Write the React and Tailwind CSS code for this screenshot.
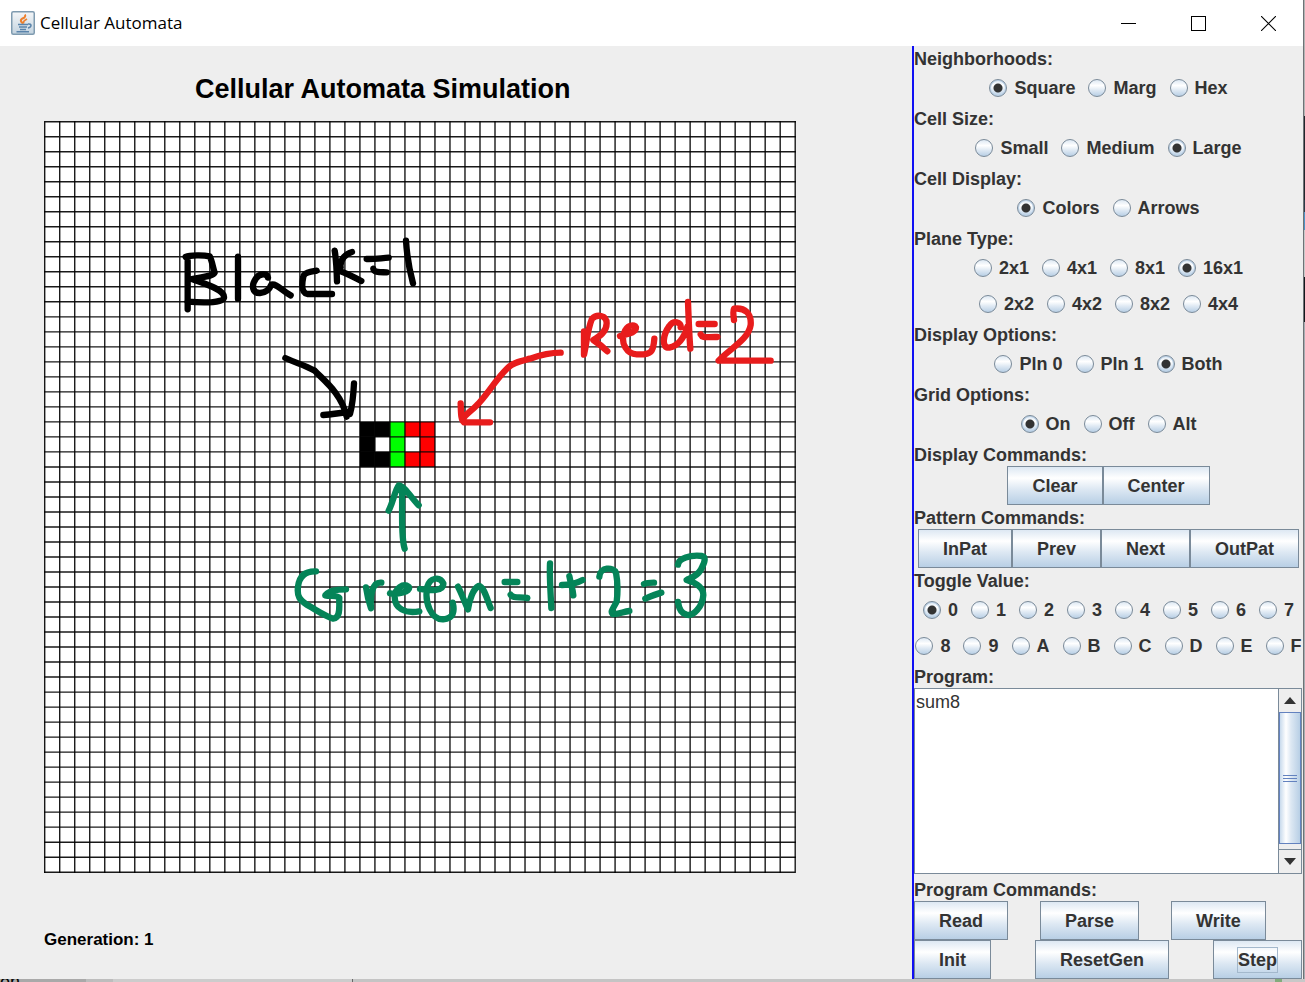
import { useState } from "react";

const CELLS = 50;
const PITCH = 15.01;
const LINES = Array.from({ length: CELLS + 1 }, (_, i) => i * PITCH + 0.7);

const PATTERN = [
  [21, 20, "#000"], [22, 20, "#000"], [23, 20, "#0f0"], [24, 20, "#f00"], [25, 20, "#f00"],
  [21, 21, "#000"], [23, 21, "#0f0"], [25, 21, "#f00"],
  [21, 22, "#000"], [22, 22, "#000"], [23, 22, "#0f0"], [24, 22, "#f00"], [25, 22, "#f00"],
];

const BLACK_INK =
  "M53 92V238M47 81C60 75 100 75 119 79C126 92 128 110 134 128C128 140 95 140 66 147C100 160 165 178 162 203C158 220 100 219 52 215" +
  "M204 80V206M294 143C292 130 270 128 258 145C242 168 248 190 270 189C288 188 298 180 304 164C320 160 335 182 362 196" +
  "M440 122C425 125 402 128 400 140C396 160 392 188 412 192H486" +
  "M494 62C499 90 500 120 501 154M546 66C530 70 508 88 512 112M508 122C530 130 550 140 574 153" +
  "M590 87C615 88 635 84 656 83M610 116C612 128 630 126 650 127M708 32C711 80 718 120 729 160" +
  "M346 384C380 400 400 404 434 422C460 450 515 490 530 560M552 460C550 500 546 530 540 552M460 555C490 553 510 548 540 546";

const RED_INK =
  "M432 124V194C440 160 442 120 456 86C470 72 500 74 500 100C500 125 480 138 460 150C475 160 490 172 502 184" +
  "M540 138C560 132 588 130 588 112C584 102 560 104 552 130C542 160 560 192 590 193C635 196 640 185 643 146" +
  "M722 112C725 95 700 90 688 108C668 135 664 175 688 173C712 168 732 145 742 110M744 36C746 90 748 140 751 176" +
  "M776 102H824M782 133C788 146 800 140 832 141" +
  "M882 90C880 75 878 62 882 56C915 52 935 70 932 105C925 150 870 175 836 212H992" +
  "M362 188C330 188 310 192 270 206C240 214 220 218 205 232C165 270 140 318 110 346C95 362 75 375 68 388M62 340C63 365 62 390 72 397H150";

const GREEN_INK =
  "M374 236C362 200 368 130 366 60M326 122C340 95 345 60 356 46C372 46 395 85 416 106" +
  "M108 304C80 303 58 315 54 350C50 380 60 390 80 404C110 420 130 436 160 446C185 444 176 400 178 384C172 374 150 380 136 376C145 362 165 358 198 358" +
  "M258 352C262 380 268 400 273 415C270 380 275 335 304 338" +
  "M330 370C350 374 395 366 386 350C370 338 345 355 344 380C344 415 375 432 418 424" +
  "M420 357C450 362 492 365 490 340C480 318 450 322 442 350C432 400 455 450 490 448C520 446 525 425 518 398" +
  "M534 350C545 370 555 400 564 418C568 390 580 355 596 348C612 350 620 385 632 414" +
  "M674 336H712M692 374C700 386 715 380 742 384M810 280C808 320 812 370 814 414" +
  "M868 318C872 340 878 355 880 376M846 345C870 345 890 340 908 330" +
  "M958 320C960 290 1000 290 1008 308C1014 340 1012 380 1010 395C1000 415 990 425 998 432C1015 434 1030 425 1048 423" +
  "M1092 342C1100 338 1110 338 1122 338M1096 386C1115 378 1130 372 1144 368" +
  "M1194 284C1196 265 1230 254 1266 258C1282 262 1270 285 1262 300C1250 320 1230 325 1220 330C1240 336 1270 350 1270 375C1268 410 1240 440 1220 434C1200 430 1196 410 1194 396";

function JavaIcon() {
  return (
    <svg width="24" height="24" viewBox="0 0 24 24" aria-hidden="true">
      <defs>
        <linearGradient id="java-tile" x1="0" y1="0" x2="0" y2="1">
          <stop offset="0" stopColor="#f4f6f8" />
          <stop offset="1" stopColor="#c3d3df" />
        </linearGradient>
      </defs>
      <rect x="0.75" y="0.75" width="22.5" height="22.5" rx="1.5" fill="url(#java-tile)" stroke="#7f9bb0" strokeWidth="1.5" />
      <path d="M12 12.5C7.500 9 11 7.500 13.500 6.500C14.500 5.500 14.500 4.500 14 3.500" fill="none" stroke="#ee7f2b" strokeWidth="2" />
      <path d="M13 12.500C11.500 10.500 13.500 9.500 16 8" fill="none" stroke="#ee7f2b" strokeWidth="1.600" />
      <path d="M7 13.500H17M8 16H16M9 18.500H15M5.500 20.800H18" fill="none" stroke="#5a84ab" strokeWidth="1.500" />
      <path d="M17 13C21 12.500 21 16 17 17" fill="none" stroke="#5a84ab" strokeWidth="1.500" />
    </svg>
  );
}

function TitleBar() {
  const control = "flex h-full w-[70px] items-center justify-center hover:bg-gray-200";
  return (
    <header className="flex h-[46px] items-center bg-white pl-[11px]">
      <JavaIcon />
      <h1 className="ml-[5px] flex-1 font-['Open_Sans',sans-serif] text-[17px] leading-6 text-black">Cellular Automata</h1>
      <button type="button" aria-label="Minimize" className={control}>
        <svg width="15" height="15" viewBox="0 0 15 15"><path d="M0 7.500H15" stroke="#000" /></svg>
      </button>
      <button type="button" aria-label="Maximize" className={control}>
        <svg width="15" height="15" viewBox="0 0 15 15"><rect x="0.5" y="0.5" width="14" height="14" fill="none" stroke="#000" /></svg>
      </button>
      <button type="button" aria-label="Close" className={control}>
        <svg width="15" height="15" viewBox="0 0 15 15"><path d="M0 0L15 15M15 0L0 15" stroke="#000" strokeWidth="1.100" /></svg>
      </button>
    </header>
  );
}

function Ink({ x, y, color, d }) {
  return (
    <path
      d={d}
      transform={`translate(${x} ${y}) scale(0.33333)`}
      fill="none"
      stroke={color}
      strokeWidth="19"
      strokeLinecap="round"
      strokeLinejoin="round"
    />
  );
}

function Plane() {
  const end = CELLS * PITCH;
  return (
    <svg className="block shrink-0" width="753" height="753" viewBox="44 121 753 753" role="img" aria-label="Cell plane">
      <g transform="translate(44 121)">
        <rect x="0.7" y="0.7" width={end} height={end} fill="#fff" />
        {PATTERN.map(([col, row, fill]) => (
          <rect key={`${col}-${row}`} x={LINES[col]} y={LINES[row]} width={PITCH} height={PITCH} fill={fill} />
        ))}
        <g stroke="#000" strokeOpacity="0.9" strokeWidth="1.400">
          {LINES.map((p) => (
            <path key={p} d={`M${p} 0V${end + 1.4}M0 ${p}H${end + 1.4}`} />
          ))}
        </g>
      </g>
      <Ink x={170} y={230} color="#000" d={BLACK_INK} />
      <Ink x={440} y={290} color="#e81c1c" d={RED_INK} />
      <Ink x={280} y={470} color="#048458" d={GREEN_INK} />
    </svg>
  );
}

function Label({ children, htmlFor }) {
  const Tag = htmlFor ? "label" : "h3";
  return (
    <Tag htmlFor={htmlFor} className="block h-6 leading-[26px]">
      {children}
    </Tag>
  );
}

function RadioGroup({ label, name, rows, initial }) {
  const [value, setValue] = useState(initial);
  return (
    <section role="radiogroup" aria-label={label}>
      <Label>{label}</Label>
      {rows.map((row) => (
        <div key={row[0]} className="flex h-9 items-center justify-center gap-[13px]">
          {row.map((option) => (
            <label key={option} className="flex items-center gap-[7px] leading-[26px]">
              <input
                type="radio"
                name={name}
                value={option}
                checked={value === option}
                onChange={() => setValue(option)}
                className="size-[18px] shrink-0 appearance-none rounded-full border border-[#7a8a99] bg-[linear-gradient(#dde8f3,#ffffff_35%,#dde8f3_65%,#b8cfe5)] checked:bg-[radial-gradient(circle,#333333_4px,transparent_5px),linear-gradient(#dde8f3,#ffffff_35%,#dde8f3_65%,#b8cfe5)] checked:shadow-[inset_0_0_0_1px_#b8cfe5]"
              />
              {option}
            </label>
          ))}
        </div>
      ))}
    </section>
  );
}

function PushButton({ children, focused }) {
  return (
    <button
      type="button"
      className="h-[39px] border border-[#7a8a99] bg-[linear-gradient(#dde8f3,#ffffff_30%,#dde8f3_60%,#b8cfe5)] px-6 leading-6 font-bold"
    >
      {focused ? <span className="block outline outline-[#a3b8cc]">{children}</span> : children}
    </button>
  );
}

function ScrollBar() {
  return (
    <div className="flex w-[23px] flex-col border-l border-[#7a8a99] bg-[#eeeeee]">
      <button type="button" aria-label="Scroll up" className="flex h-[23px] items-center justify-center">
        <svg width="12" height="7" viewBox="0 0 12 7"><path d="M0 7L6 0L12 7Z" fill="#333" /></svg>
      </button>
      <div className="flex flex-1 flex-col items-center justify-center gap-[2px] border border-[#6382bf] bg-[linear-gradient(90deg,#c8daec,#ffffff_30%,#dde8f3_55%,#b8cfe5)]">
        <span className="h-px w-[14px] bg-[#6382bf]" />
        <span className="h-px w-[14px] bg-[#6382bf]" />
        <span className="h-px w-[14px] bg-[#6382bf]" />
      </div>
      <div className="h-[6px] border-b border-[#7a8a99]" />
      <button type="button" aria-label="Scroll down" className="flex h-[23px] items-center justify-center">
        <svg width="12" height="7" viewBox="0 0 12 7"><path d="M0 0L6 7L12 0Z" fill="#333" /></svg>
      </button>
    </div>
  );
}

function ControlPanel() {
  return (
    <aside className="w-[391px] shrink-0 border-l-2 border-[#1010f4] text-[18px] font-bold text-[#333333]">
      <RadioGroup label="Neighborhoods:" name="neighborhood" rows={[["Square", "Marg", "Hex"]]} initial="Square" />
      <RadioGroup label="Cell Size:" name="size" rows={[["Small", "Medium", "Large"]]} initial="Large" />
      <RadioGroup label="Cell Display:" name="display" rows={[["Colors", "Arrows"]]} initial="Colors" />
      <RadioGroup
        label="Plane Type:"
        name="plane"
        rows={[["2x1", "4x1", "8x1", "16x1"], ["2x2", "4x2", "8x2", "4x4"]]}
        initial="16x1"
      />
      <RadioGroup label="Display Options:" name="options" rows={[["Pln 0", "Pln 1", "Both"]]} initial="Both" />
      <RadioGroup label="Grid Options:" name="grid" rows={[["On", "Off", "Alt"]]} initial="On" />
      <Label>Display Commands:</Label>
      <div className="flex justify-center">
        <PushButton>Clear</PushButton>
        <PushButton>Center</PushButton>
      </div>
      <Label>Pattern Commands:</Label>
      <div className="flex justify-center">
        <PushButton>InPat</PushButton>
        <PushButton>Prev</PushButton>
        <PushButton>Next</PushButton>
        <PushButton>OutPat</PushButton>
      </div>
      <RadioGroup
        label="Toggle Value:"
        name="toggle"
        rows={[["0", "1", "2", "3", "4", "5", "6", "7"], ["8", "9", "A", "B", "C", "D", "E", "F"]]}
        initial="0"
      />
      <Label htmlFor="program">Program:</Label>
      <div className="mr-px mb-[3px] flex h-[186px] border border-[#7a8a99] bg-white">
        <textarea
          id="program"
          defaultValue="sum8"
          spellCheck={false}
          className="min-w-0 flex-1 resize-none overflow-hidden px-px pt-px leading-6 font-normal outline-none"
        />
        <ScrollBar />
      </div>
      <Label>Program Commands:</Label>
      <div className="flex gap-8">
        <PushButton>Read</PushButton>
        <PushButton>Parse</PushButton>
        <PushButton>Write</PushButton>
      </div>
      <div className="mr-px flex justify-between">
        <PushButton>Init</PushButton>
        <PushButton>ResetGen</PushButton>
        <PushButton focused>Step</PushButton>
      </div>
    </aside>
  );
}

export default function App() {
  return (
    <div className="flex min-h-screen flex-col bg-[#c8c8c8] font-['Liberation_Sans',Arial,sans-serif]">
      <div className="flex flex-1">
        <div className="flex min-w-0 flex-1 flex-col bg-[#eeeeee]">
          <TitleBar />
          <div className="flex flex-1">
            <main className="min-w-0 flex-1 overflow-hidden pl-[44px] text-black">
              <h2 className="pt-[27px] pb-4 pl-[151px] text-[27px] leading-8 font-bold">Cellular Automata Simulation</h2>
              <Plane />
              <p className="pt-[54px] text-[17px] leading-6 font-bold">Generation: 1</p>
            </main>
            <ControlPanel />
          </div>
        </div>
        <div className="w-[2px] border-l border-[#6e7276] bg-[linear-gradient(#b4b4b4_116px,#22252b_116px_200px,#2c3a48_200px_212px,#4e94c8_212px_230px,#c8c8c8_230px_277px,#14171c_277px_322px,#a8adb2_322px)]" />
      </div>
      <footer className="flex h-[3px] overflow-hidden">
        <span className="w-[86px] bg-[#a9a9a9] text-[18px] leading-[7px] text-black">on</span>
        <span className="w-[27px] bg-[#bdbdbd]" />
        <span className="w-[240px] border-r border-[#666666] bg-[#cccccc]" />
        <span className="flex-1 bg-[#c4c4c4]" />
        <span className="mr-[23px] w-[7px] bg-[#83ab7c]" />
      </footer>
    </div>
  );
}
